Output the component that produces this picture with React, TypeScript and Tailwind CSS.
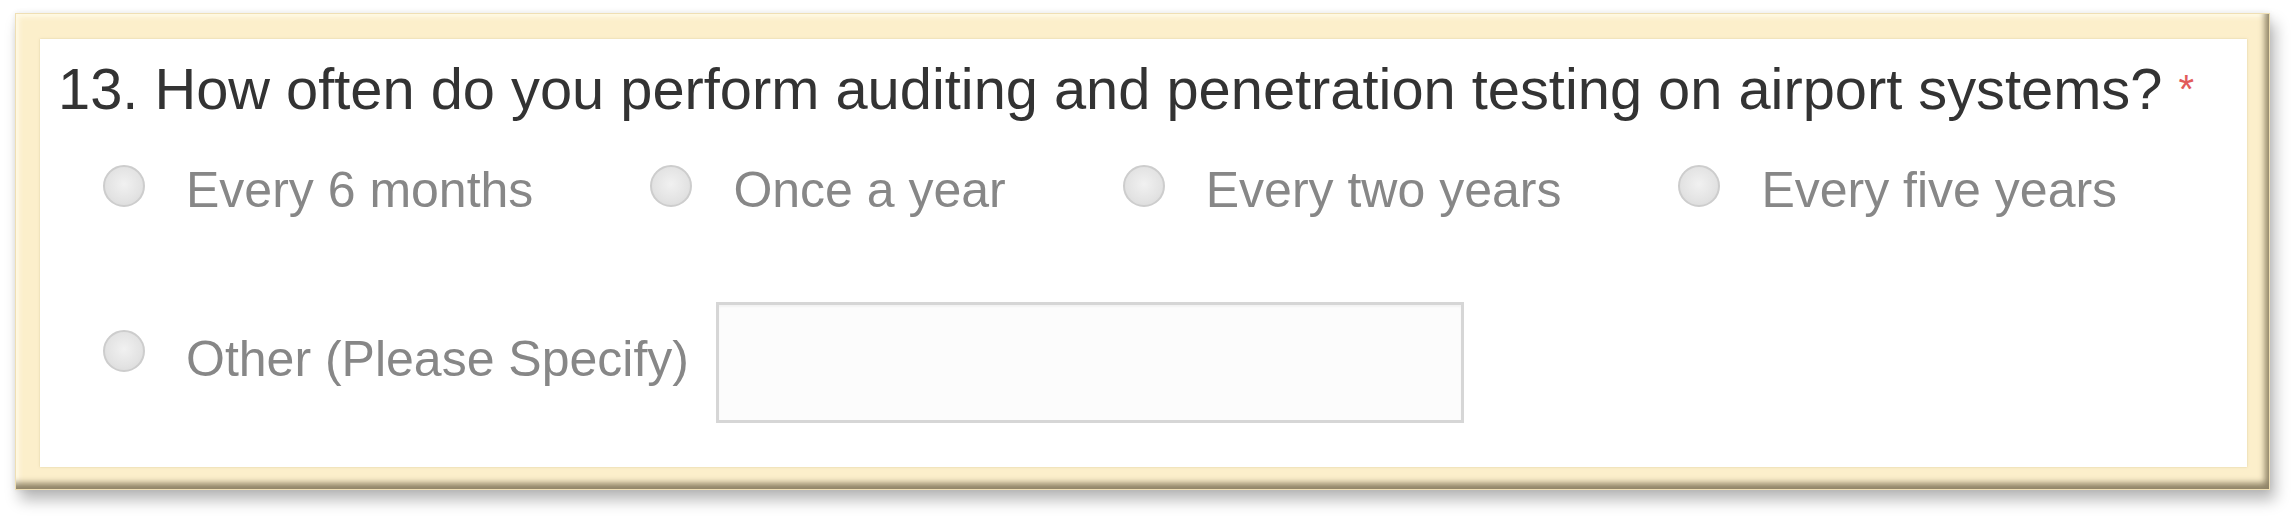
import React from 'react';

const options = ['Every 6 months', 'Once a year', 'Every two years', 'Every five years'];

const Radio: React.FC<{ className?: string }> = ({ className = '' }) => (
  <span
    className={`block w-[42px] h-[42px] shrink-0 rounded-full border-2 border-[#cdcdcd] bg-[radial-gradient(circle_at_50%_45%,#f1f1f1_0%,#e3e3e3_60%,#d6d6d6_100%)] ${className}`}
  />
);

const App: React.FC = () => {
  return (
    <div className="w-[2292px] h-[517px] bg-white pt-[13px] pl-[15px] font-['Liberation_Sans',Arial,sans-serif]">
      <div className="w-[2255px] h-[477px] pt-[26px] pl-[25px] pr-[23px] pb-[23px] bg-[#fcefcb] shadow-[inset_0_0_0_1px_#efdfb4,inset_-7px_-9px_6px_-2px_rgba(115,104,78,0.8),inset_4px_4px_5px_rgba(255,250,232,0.95),5px_10px_14px_rgba(0,0,0,0.28),0_0_6px_rgba(0,0,0,0.08)]">
        <div className="h-full bg-white pt-[17px] pl-[18px] shadow-[0_0_2px_rgba(200,180,130,0.6)]">
          <h2 className="text-[57.8px] leading-[66px] text-[#333333] font-normal">
            13. How often do you perform auditing and penetration testing on airport systems?{' '}
            <span className="text-[40px] align-[6px] text-[#e25b5b]">*</span>
          </h2>

          <div className="mt-[39px] ml-[45px] flex gap-x-[117px]">
            {options.map(opt => (
              <label key={opt} className="flex items-start gap-[41px]">
                <Radio className="mt-[4px]" />
                <span className="text-[50px] leading-[58px] text-[#878787]">{opt}</span>
              </label>
            ))}
          </div>

          <div className="mt-[83px] ml-[45px] flex items-start">
            <Radio className="mt-[28px]" />
            <span className="ml-[41px] mt-[28px] text-[50px] leading-[58px] text-[#878787]">
              Other (Please Specify)
            </span>
            <div className="ml-[27px] w-[748px] h-[121px] border-[3px] border-[#d6d6d6] bg-[#fcfcfc] shadow-[inset_0_2px_2px_rgba(0,0,0,0.04)]" />
          </div>
        </div>
      </div>
    </div>
  );
};

export default App;
